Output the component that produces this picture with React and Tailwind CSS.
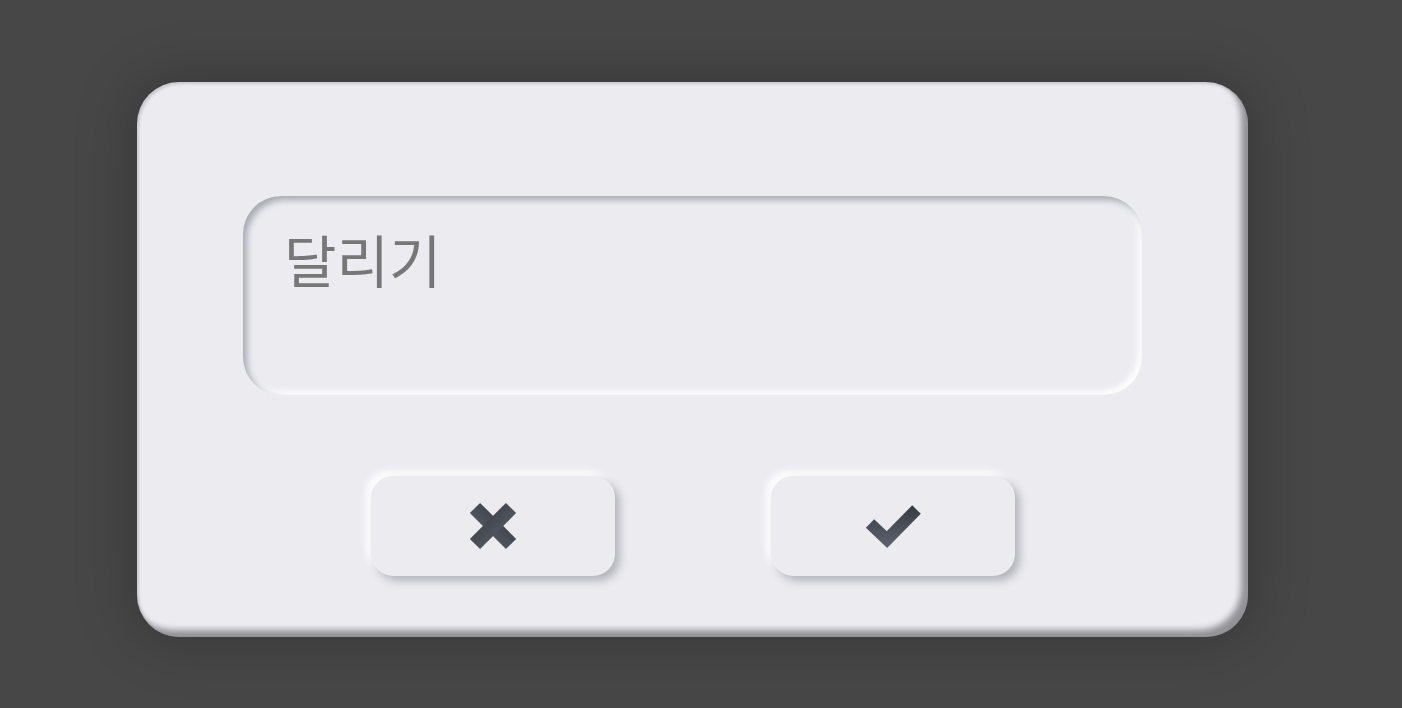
import React from "react";

const XIcon = () => (
  <svg width="48" height="48" viewBox="0 0 48 48">
    <defs>
      <linearGradient id="gx" gradientUnits="userSpaceOnUse" x1="0" y1="0" x2="0" y2="48">
        <stop offset="0" stopColor="#363940" />
        <stop offset="1" stopColor="#5d626d" />
      </linearGradient>
    </defs>
    <g fill="url(#gx)">
      <rect x="-1.5" y="16.8" width="51" height="14.4" transform="rotate(45 24 24)" />
      <rect x="-1.5" y="16.8" width="51" height="14.4" transform="rotate(-45 24 24)" />
    </g>
  </svg>
);

const CheckIcon = () => (
  <svg width="60" height="50" viewBox="0 0 60 50">
    <defs>
      <linearGradient id="gc" gradientUnits="userSpaceOnUse" x1="0" y1="2" x2="0" y2="46">
        <stop offset="0" stopColor="#363940" />
        <stop offset="1" stopColor="#5d626d" />
      </linearGradient>
    </defs>
    <polyline
      points="7,22.5 24,38.5 53.5,8.5"
      fill="none"
      stroke="url(#gc)"
      strokeWidth="12"
      strokeLinejoin="miter"
      strokeLinecap="butt"
    />
  </svg>
);

const App = () => {
  return (
    <div className="w-[1402px] h-[708px] bg-[#474748] pl-[137px] pt-[82px] font-['Noto_Sans_CJK_KR','Noto_Sans',sans-serif]">
      <div className="w-[1111px] h-[555px] rounded-[42px] bg-[#ebebf0] px-[106px] pt-[114px] shadow-[inset_-7px_-7px_6px_rgba(0,0,0,0.38),inset_2px_2px_3px_rgba(0,0,0,0.15),0_0_60px_rgba(0,0,0,0.25)]">
        <div className="h-[199px] rounded-[38px] bg-[#ebebf0] pl-[41px] pt-[22px] shadow-[inset_4px_4px_6px_#a9abb2,inset_-4px_-4px_6px_#ffffff]">
          <span className="text-[57px] leading-[80px] text-[#777777]">달리기</span>
        </div>
        <div className="flex justify-center gap-[156px] mt-[81px]">
          <button className="w-[244px] h-[100px] rounded-[22px] bg-[#ebebf0] flex items-center justify-center shadow-[5px_5px_8px_#b4b5bc,-5px_-5px_8px_#ffffff]">
            <XIcon />
          </button>
          <button className="w-[244px] h-[100px] rounded-[22px] bg-[#ebebf0] flex items-center justify-center shadow-[5px_5px_8px_#b4b5bc,-5px_-5px_8px_#ffffff]">
            <CheckIcon />
          </button>
        </div>
      </div>
    </div>
  );
};

export default App;
